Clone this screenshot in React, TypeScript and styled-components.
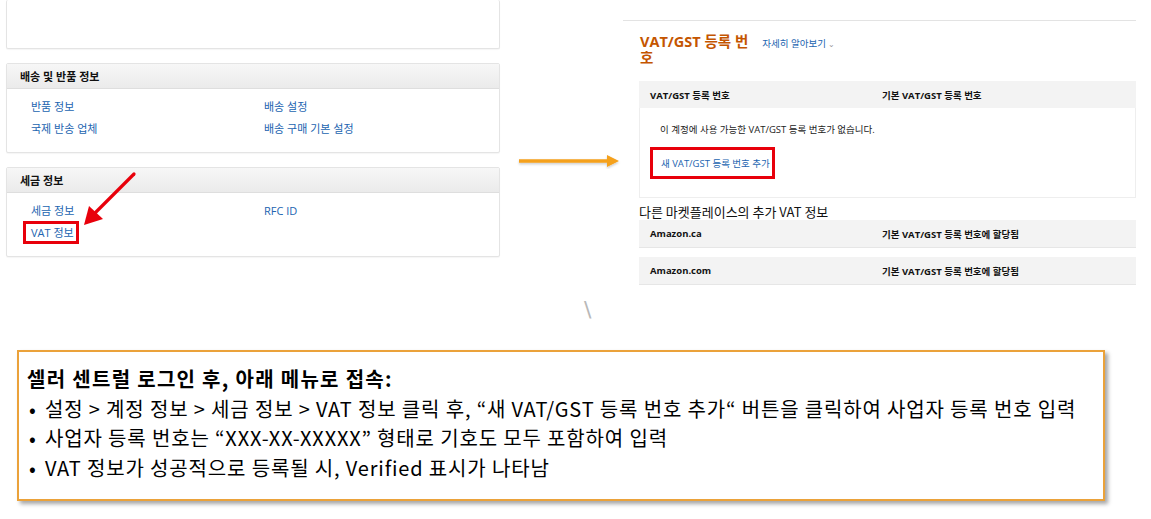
import React from "react"
import styled, { createGlobalStyle } from "styled-components"

const GlobalStyle = createGlobalStyle`
    html, body {
        margin: 0;
        padding: 0;
        background: #fff;
    }
    body {
        font-family: "Open Sans", "Noto Sans CJK KR", sans-serif;
        color: #111;
    }
`

const uiFont = `"Open Sans", "Noto Sans CJK KR", sans-serif`

const Page = styled.div`
    width: 1151px;
    height: 519px;
    overflow: hidden;
    display: flex;
    flex-direction: column;
`

const Shots = styled.div`
    display: flex;
    align-items: flex-start;
    padding-left: 6px;
`

const LeftShot = styled.div`
    position: relative;
    width: 494px;
    display: flex;
    flex-direction: column;
    gap: 14px;
`

const Card = styled.div<{ $cut?: boolean }>`
    box-sizing: border-box;
    border: 1px solid #e4e4e4;
    border-top: ${(p) => (p.$cut ? "none" : "1px solid #e4e4e4")};
    border-radius: 2px;
    background: #fff;
    box-shadow: 0 1px 1px rgba(0, 0, 0, 0.04);
    height: ${(p) => (p.$cut ? "49px" : "90px")};
`

const CardHeader = styled.div`
    height: 24px;
    display: flex;
    align-items: center;
    padding-left: 13px;
    background: linear-gradient(#f7f7f7, #ebebeb);
    border-bottom: 1px solid #dedede;
    font-family: ${uiFont};
    font-size: 11px;
    font-weight: 700;
    color: #111;
`

const LinkGrid = styled.div`
    display: grid;
    grid-template-columns: 233px 1fr;
    padding: 7px 0 0 24px;
    line-height: 22px;
`

const Link = styled.a<{ $boxed?: boolean }>`
    font-family: ${uiFont};
    font-size: 11px;
    color: #2264b0;
    text-decoration: none;
    display: inline-block;
    justify-self: start;
    ${(p) =>
        p.$boxed &&
        `
        line-height: 17px;
        margin-left: -5px;
        padding: 0 2px 0 5px;
        outline: 3px solid #e8000b;
        margin-top: 2px;
    `}
`

const RedArrow = styled.svg`
    position: absolute;
    left: 70px;
    top: 168px;
    pointer-events: none;
`

const ArrowCell = styled.div`
    width: 123px;
    padding: 153px 0 0 16px;
    box-sizing: border-box;
    display: flex;
`

const RightShot = styled.div`
    margin-top: 20px;
    width: 513px;
    border-top: 1px solid #e3e3e3;
    font-family: ${uiFont};
`

const TitleRow = styled.div`
    display: flex;
    align-items: flex-start;
    gap: 14px;
    padding: 13px 0 0 17px;
`

const Title = styled.h1`
    margin: 0;
    font-size: 14.5px;
    line-height: 16px;
    font-weight: 700;
    color: #c45500;
`

const TitleLine = styled.span`
    display: block;
    height: 16px;
    overflow: visible;
`

const LearnMore = styled.span`
    font-size: 9.5px;
    color: #2264b0;
    padding-top: 2px;

    &:after {
        content: " ⌄";
        color: #999;
        font-size: 8px;
    }
`

const Table = styled.div`
    margin: 15px 0 0 16px;
`

const Row = styled.div<{ $head?: boolean }>`
    display: grid;
    grid-template-columns: 232px 1fr;
    height: 27px;
    align-items: center;
    padding-left: 11px;
    background: #f3f3f3;
    border-bottom: ${(p) => (p.$head ? "none" : "1px solid #e6e6e6")};
    font-size: 9.5px;
    font-weight: 700;
    color: #111;
`

const TableBody = styled.div`
    box-sizing: border-box;
    height: 90px;
    border: 1px solid #eeeeee;
    border-top: none;
    padding: 14px 0 0 10px;
`

const EmptyText = styled.div`
    font-size: 9.5px;
    color: #222;
    padding-left: 10px;
`

const AddButton = styled.div`
    box-sizing: border-box;
    margin-top: 11px;
    width: 125px;
    height: 32px;
    border: 3px solid #e8000b;
    display: flex;
    align-items: center;
    padding-left: 8px;
    font-size: 9.5px;
    color: #2264b0;
`

const SectionTitle = styled.div`
    font-size: 13px;
    line-height: 16px;
    color: #111;
    margin-top: 6px;
    font-family: "Noto Sans CJK KR", sans-serif;
`

const Rows = styled.div`
    display: flex;
    flex-direction: column;
    gap: 9px;
`

const Mark = styled.div`
    height: 65px;
    padding-left: 584px;
    color: #b8b8b8;
    font-family: "DejaVu Sans", sans-serif;
    font-size: 22px;
    line-height: 22px;
    padding-top: 14px;
    box-sizing: border-box;
`

const Note = styled.div`
    box-sizing: border-box;
    margin-left: 17px;
    width: 1088px;
    height: 151px;
    border: 2px solid #eba23a;
    box-shadow: 3px 3px 4px rgba(0, 0, 0, 0.35);
    padding: 12px 0 0 8px;
    font-family: "Noto Sans CJK KR", sans-serif;
    font-size: 20px;
    letter-spacing: 0.85px;
    line-height: 29.5px;
    color: #000;
`

const NoteTitle = styled.div`
    font-weight: 700;
    letter-spacing: 1.3px;
`

const Bullets = styled.ul`
    list-style: none;
    margin: 0;
    padding: 0;
`

const Bullet = styled.li`
    display: flex;

    &:before {
        content: "•";
        width: 16px;
        padding-left: 2px;
        flex: none;
    }
`

export default function App() {
    return (
        <>
            <GlobalStyle />
            <Page>
                <Shots>
                    <LeftShot>
                        <Card $cut />
                        <Card>
                            <CardHeader>배송 및 반품 정보</CardHeader>
                            <LinkGrid>
                                <Link>반품 정보</Link>
                                <Link>배송 설정</Link>
                                <Link>국제 반송 업체</Link>
                                <Link>배송 구매 기본 설정</Link>
                            </LinkGrid>
                        </Card>
                        <Card>
                            <CardHeader>세금 정보</CardHeader>
                            <LinkGrid>
                                <Link>세금 정보</Link>
                                <Link>RFC ID</Link>
                                <Link $boxed>VAT 정보</Link>
                            </LinkGrid>
                        </Card>
                        <RedArrow width="64" height="64" viewBox="0 0 64 64">
                            <line x1="58" y1="6" x2="18" y2="46" stroke="#e8000b" strokeWidth="3.2" strokeLinecap="round" />
                            <polygon points="8,57 13,38 27,51" fill="#e8000b" />
                        </RedArrow>
                    </LeftShot>
                    <ArrowCell>
                        <svg width="106" height="16" viewBox="0 0 106 16">
                            <defs>
                                <filter id="sh" x="-10%" y="-50%" width="120%" height="200%">
                                    <feDropShadow dx="0" dy="1.5" stdDeviation="1" floodColor="#000" floodOpacity="0.2" />
                                </filter>
                            </defs>
                            <g filter="url(#sh)">
                                <line x1="3" y1="8" x2="92" y2="8" stroke="#f5a11e" strokeWidth="3.5" />
                                <polygon points="91,2 103,8 91,14" fill="#f5a11e" />
                            </g>
                        </svg>
                    </ArrowCell>
                    <RightShot>
                        <TitleRow>
                            <Title>
                                <TitleLine>VAT/GST 등록 번</TitleLine>
                                <TitleLine>호</TitleLine>
                            </Title>
                            <LearnMore>자세히 알아보기</LearnMore>
                        </TitleRow>
                        <Table>
                            <Row $head>
                                <span>VAT/GST 등록 번호</span>
                                <span>기본 VAT/GST 등록 번호</span>
                            </Row>
                            <TableBody>
                                <EmptyText>이 계정에 사용 가능한 VAT/GST 등록 번호가 없습니다.</EmptyText>
                                <AddButton>새 VAT/GST 등록 번호 추가</AddButton>
                            </TableBody>
                            <SectionTitle>다른 마켓플레이스의 추가 VAT 정보</SectionTitle>
                            <Rows>
                                <Row>
                                    <span>Amazon.ca</span>
                                    <span>기본 VAT/GST 등록 번호에 할당됨</span>
                                </Row>
                                <Row>
                                    <span>Amazon.com</span>
                                    <span>기본 VAT/GST 등록 번호에 할당됨</span>
                                </Row>
                            </Rows>
                        </Table>
                    </RightShot>
                </Shots>
                <Mark>\</Mark>
                <Note>
                    <NoteTitle>셀러 센트럴 로그인 후, 아래 메뉴로 접속:</NoteTitle>
                    <Bullets>
                        <Bullet>설정 &gt; 계정 정보 &gt; 세금 정보 &gt; VAT 정보 클릭 후, “새 VAT/GST 등록 번호 추가“ 버튼을 클릭하여 사업자 등록 번호 입력</Bullet>
                        <Bullet>사업자 등록 번호는 “XXX-XX-XXXXX” 형태로 기호도 모두 포함하여 입력</Bullet>
                        <Bullet>VAT 정보가 성공적으로 등록될 시, Verified 표시가 나타남</Bullet>
                    </Bullets>
                </Note>
            </Page>
        </>
    )
}
